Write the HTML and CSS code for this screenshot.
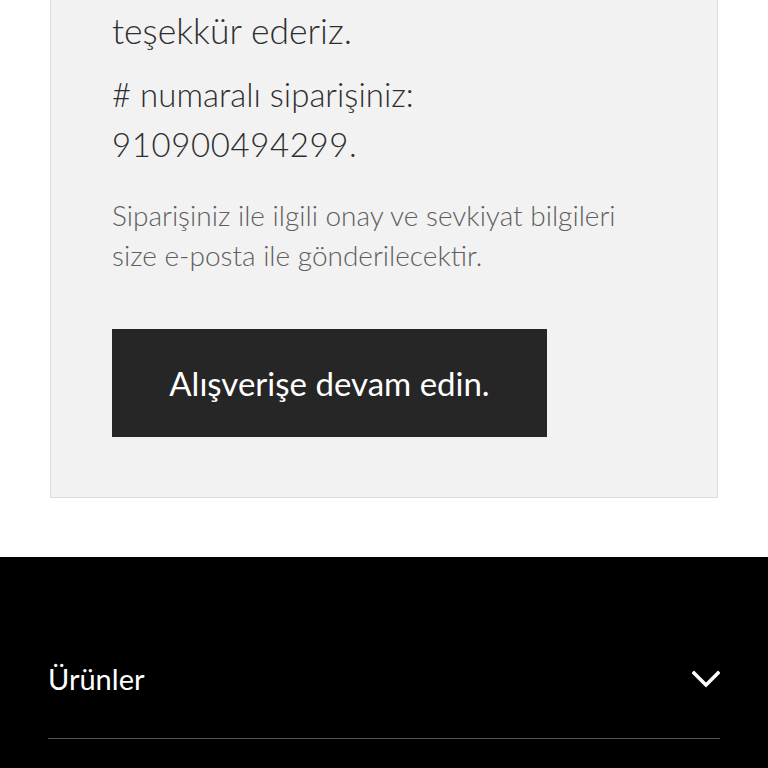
FILE: index.html
```html
<!DOCTYPE html>
<html lang="tr">
<head>
  <meta charset="UTF-8" />
  <meta name="viewport" content="width=device-width, initial-scale=1" />
  <title>Sipariş onayı</title>
  <link rel="stylesheet" href="styles.css">
</head>
<body>

<main class="page">
  <section class="confirm">
    <h1 class="confirm-title">teşekkür ederiz.</h1>
    <p class="confirm-order"># numaralı siparişiniz:<br><span class="order-no">910900494299.</span></p>
    <p class="confirm-note">Siparişiniz ile ilgili onay ve sevkiyat bilgileri<br>size e-posta ile gönderilecektir.</p>
    <a class="confirm-button" href="#">Alışverişe devam edin.</a>
  </section>
</main>

<footer class="footer">
  <div class="footer-item">
    <span>Ürünler</span>
    <svg class="chevron" width="28" height="18" viewBox="0 0 28 18" fill="none">
      <path d="M2 3 L14 15 L26 3" stroke="#fff" stroke-width="3.4" stroke-linecap="square"/>
    </svg>
  </div>
</footer>

</body>
</html>
```

FILE: styles.css
```css
body {
  margin: 0;
  background: #fff;
  font-family: Lato, 'Open Sans', sans-serif;
  color: #333;
}
.page {
  padding: 0 50px 59px;
  margin-top: -20px;
}
.confirm {
  background: #f2f2f2;
  border: 1px solid #dcdcdc;
  padding: 26px 61px 60px;
}
.confirm-title {
  font-size: 35.5px;
  font-weight: 300;
  line-height: 48px;
  margin: 0 0 14px;
  color: #2e2e2e;
}
.confirm-order {
  font-size: 33px;
  font-weight: 300;
  line-height: 50px;
  margin: 0 0 26px;
  color: #2e2e2e;
}
.order-no {
  letter-spacing: 0.6px;
}
.confirm-note {
  font-size: 28px;
  font-weight: 300;
  line-height: 40px;
  color: #5e5e5e;
  margin: 0 0 54px;
}
.confirm-button {
  display: flex;
  align-items: center;
  justify-content: center;
  width: 435px;
  height: 108px;
  background: #262626;
  color: #fff;
  font-size: 33px;
  font-weight: 400;
  text-decoration: none;
}
.footer {
  background: #000;
  color: #fff;
  padding: 104px 48px 40px;
}
.footer-item {
  display: flex;
  justify-content: space-between;
  align-items: center;
  font-size: 29px;
  padding-bottom: 42px;
  border-bottom: 1px solid #555;
}
```
